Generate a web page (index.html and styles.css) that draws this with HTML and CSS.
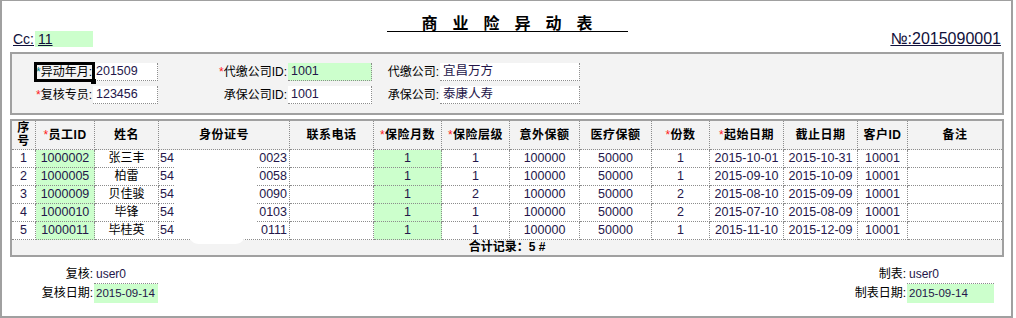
FILE: index.html
```html
<!DOCTYPE html>
<html lang="zh-CN">
<head>
<meta charset="utf-8">
<title>商业险异动表</title>
<link rel="stylesheet" href="styles.css">
</head>
<body>
<div class="frame">
  <span class="edge edge-top"></span>
  <span class="edge edge-left"></span>

  <h1 class="title">商业险异动表</h1>

  <div class="meta">
    <div class="cc"><span class="cc-label">Cc:</span><span class="cc-value"><u>11</u></span></div>
    <div class="no">№:2015090001</div>
  </div>

  <div class="panel form">
    <div class="label"><span class="req req-focus">*</span>异动年月:<span class="focus"></span><span class="handle"></span></div>
    <div class="field">201509</div>
    <div class="label"><span class="req">*</span>代缴公司ID:</div>
    <div class="field green">1001</div>
    <div class="label">代缴公司:</div>
    <div class="field">宜昌万方</div>

    <div class="label"><span class="req">*</span>复核专员:</div>
    <div class="field">123456</div>
    <div class="label">承保公司ID:</div>
    <div class="field">1001</div>
    <div class="label">承保公司:</div>
    <div class="field">泰康人寿</div>
  </div>

  <div class="panel grid-panel">
    <table class="grid">
      <colgroup>
        <col class="w1"><col class="w2"><col class="w3"><col class="w4"><col class="w5"><col class="w6"><col class="w7">
        <col class="w8"><col class="w9"><col class="w10"><col class="w11"><col class="w12"><col class="w13"><col class="w14">
      </colgroup>
      <thead>
        <tr>
          <th>序<br>号</th>
          <th><span class="req">*</span>员工ID</th>
          <th>姓名</th>
          <th>身份证号</th>
          <th>联系电话</th>
          <th><span class="req">*</span>保险月数</th>
          <th><span class="req">*</span>保险层级</th>
          <th>意外保额</th>
          <th>医疗保额</th>
          <th><span class="req">*</span>份数</th>
          <th><span class="req">*</span>起始日期</th>
          <th>截止日期</th>
          <th>客户ID</th>
          <th>备注</th>
        </tr>
      </thead>
      <tbody>
        <tr>
          <td>1</td><td class="g">1000002</td><td class="cn">张三丰</td>
          <td><div class="idv"><span>54</span><span>0023</span></div></td><td></td>
          <td class="g">1</td><td>1</td><td>100000</td><td>50000</td><td>1</td>
          <td>2015-10-01</td><td>2015-10-31</td><td>10001</td><td></td>
        </tr>
        <tr>
          <td>2</td><td class="g">1000005</td><td class="cn">柏雷</td>
          <td><div class="idv"><span>54</span><span>0058</span></div></td><td></td>
          <td class="g">1</td><td>1</td><td>100000</td><td>50000</td><td>1</td>
          <td>2015-09-10</td><td>2015-10-09</td><td>10001</td><td></td>
        </tr>
        <tr>
          <td>3</td><td class="g">1000009</td><td class="cn">贝佳骏</td>
          <td><div class="idv"><span>54</span><span>0090</span></div></td><td></td>
          <td class="g">1</td><td>2</td><td>100000</td><td>50000</td><td>2</td>
          <td>2015-08-10</td><td>2015-09-09</td><td>10001</td><td></td>
        </tr>
        <tr>
          <td>4</td><td class="g">1000010</td><td class="cn">毕锋</td>
          <td><div class="idv"><span>54.</span><span>0103</span></div></td><td></td>
          <td class="g">1</td><td>1</td><td>100000</td><td>50000</td><td>2</td>
          <td>2015-07-10</td><td>2015-08-09</td><td>10001</td><td></td>
        </tr>
        <tr>
          <td>5</td><td class="g">1000011</td><td class="cn">毕桂英</td>
          <td><div class="idv"><span>54</span><span>0111</span></div></td><td></td>
          <td class="g">1</td><td>1</td><td>100000</td><td>50000</td><td>1</td>
          <td>2015-11-10</td><td>2015-12-09</td><td>10001</td><td></td>
        </tr>
        <tr class="total">
          <td colspan="14">合计记录：5 #</td>
        </tr>
      </tbody>
    </table>
    <span class="redact redact-a"></span>
    <span class="redact redact-b"></span>
  </div>

  <div class="footer">
    <div class="sign sign-left">
      <div class="slabel">复核:</div>
      <div class="sval top">user0</div>
      <div class="slabel">复核日期:</div>
      <div class="sval green">2015-09-14</div>
    </div>
    <div class="sign sign-right">
      <div class="slabel">制表:</div>
      <div class="sval top">user0</div>
      <div class="slabel">制表日期:</div>
      <div class="sval green">2015-09-14</div>
    </div>
  </div>
</div>
</body>
</html>
```

FILE: styles.css
```css
* {
  box-sizing: border-box;
}

html,
body {
  margin: 0;
  padding: 0;
  background: #ffffff;
}

body {
  font-family: "Liberation Sans", "Noto Sans CJK SC", sans-serif;
  font-size: 12px;
  color: #000000;
}

.frame {
  position: relative;
  width: 1013px;
  height: 318px;
  border: 2px solid #a0a0a0;
  border-top-width: 1px;
  padding: 0 7px 0 8px;
  overflow: hidden;
}

.edge {
  position: absolute;
  background: #000080;
}

.edge-top {
  top: -1px;
  left: 34px;
  width: 58px;
  height: 1px;
}

.edge-left {
  left: -2px;
  top: 54px;
  width: 2px;
  height: 27px;
}

/* title */
.title {
  width: 241px;
  height: 31px;
  margin: 0 auto;
  padding: 13px 0 0 15px;
  border-bottom: 1px solid #000000;
  font-family: "Noto Sans CJK SC", sans-serif;
  font-size: 16px;
  font-weight: bold;
  line-height: 16px;
  letter-spacing: 15px;
  text-align: center;
  white-space: nowrap;
}

/* Cc / number row */
.meta {
  display: flex;
  justify-content: space-between;
  align-items: flex-start;
  height: 16px;
  margin-top: -1px;
  padding: 0 3px;
  color: #10103a;
}

.cc {
  display: flex;
}

.cc-label {
  font-size: 14px;
  line-height: 16px;
  text-decoration: underline;
  margin-right: 1px;
}

.cc-value {
  width: 58px;
  height: 16px;
  padding-left: 3px;
  background: #ccffcc;
  font-size: 14px;
  line-height: 16px;
}

.no {
  font-size: 16px;
  line-height: 16px;
  text-decoration: underline;
}

/* panels */
.panel {
  border: 2px solid #a0a0a0;
  background: #f3f3f3;
}

.form {
  margin-top: 5px;
  height: 63px;
  padding: 9px 0;
  display: grid;
  grid-template-columns: 81px 65px 130px 84px 68px 140px;
  grid-auto-rows: 18px;
  row-gap: 5px;
}

.label {
  position: relative;
  text-align: right;
  line-height: 18px;
  padding-right: 1px;
  white-space: nowrap;
}

.req {
  color: #ff1a1a;
  font-weight: normal;
}

.req-focus {
  color: #008080;
}

.focus {
  position: absolute;
  left: 22px;
  top: -1px;
  width: 61px;
  height: 20px;
  border: 3px solid #000000;
}

.handle {
  position: absolute;
  left: 79px;
  top: 16px;
  width: 5px;
  height: 5px;
  background: #000000;
}

.field {
  background: #ffffff;
  border-right: 1px dotted #8c8c8c;
  border-bottom: 1px dotted #8c8c8c;
  padding-left: 3px;
  font-size: 12.5px;
  line-height: 17px;
  color: #24164a;
  white-space: nowrap;
  overflow: hidden;
}

.field.green {
  background: #ccffcc;
}

/* table */
.grid-panel {
  position: relative;
  margin-top: 4px;
  height: 138px;
}

.grid {
  width: 990px;
  border-collapse: separate;
  border-spacing: 0;
  table-layout: fixed;
}

.w1 { width: 24px; }
.w2 { width: 59px; }
.w3 { width: 64px; }
.w4 { width: 131px; }
.w5 { width: 84px; }
.w6 { width: 68px; }
.w7 { width: 68px; }
.w8 { width: 70px; }
.w9 { width: 72px; }
.w10 { width: 58px; }
.w11 { width: 74px; }
.w12 { width: 74px; }
.w13 { width: 50px; }
.w14 { width: 94px; }

.grid th,
.grid td {
  padding: 0;
  border-right: 1px dotted #8c8c8c;
  border-bottom: 1px dotted #8c8c8c;
  text-align: center;
  white-space: nowrap;
  overflow: hidden;
}

.grid th:last-child,
.grid td:last-child {
  border-right: none;
}

.grid thead tr {
  height: 29px;
}

.grid th {
  background: #f3f3f3;
  font-weight: bold;
  font-size: 12px;
  line-height: 13px;
  letter-spacing: 0.5px;
}

.grid tbody tr {
  height: 18px;
}

.grid td {
  background: #ffffff;
  font-size: 12.5px;
  line-height: 17px;
  color: #24164a;
}

.grid td.g {
  background: #ccffcc;
}

.grid td.cn {
  font-size: 12px;
  color: #000000;
}

.idv {
  display: flex;
  justify-content: space-between;
  padding: 0 2px 0 1px;
}

.grid tr.total {
  height: 15px;
}

.grid tr.total td {
  background: #f3f3f3;
  border: none;
  font-size: 12px;
  font-weight: bold;
  line-height: 15px;
  color: #000000;
}

.redact {
  position: absolute;
  background: #ffffff;
}

.redact-a {
  left: 162px;
  top: 29px;
  width: 83px;
  height: 88px;
  border-radius: 4px 8px 6px 10px;
}

.redact-b {
  left: 176px;
  top: 112px;
  width: 58px;
  height: 11px;
  border-radius: 0 0 14px 14px;
}

/* footer */
.footer {
  display: flex;
  justify-content: space-between;
  margin-top: 8px;
  padding-right: 10px;
}

.sign {
  display: grid;
  grid-template-rows: 19px 19px;
}

.sign-left {
  grid-template-columns: 84px 64px;
}

.sign-right {
  grid-template-columns: 61px 87px;
}

.slabel {
  text-align: right;
  line-height: 18px;
  padding-right: 1px;
  white-space: nowrap;
}

.sval {
  padding-left: 2px;
  font-size: 12px;
  line-height: 18px;
  color: #24164a;
  white-space: nowrap;
}

.sval.top {
  border-bottom: 1px dotted #8c8c8c;
}

.sval.green {
  background: #ccffcc;
  font-size: 11.5px;
  line-height: 19px;
}
```
